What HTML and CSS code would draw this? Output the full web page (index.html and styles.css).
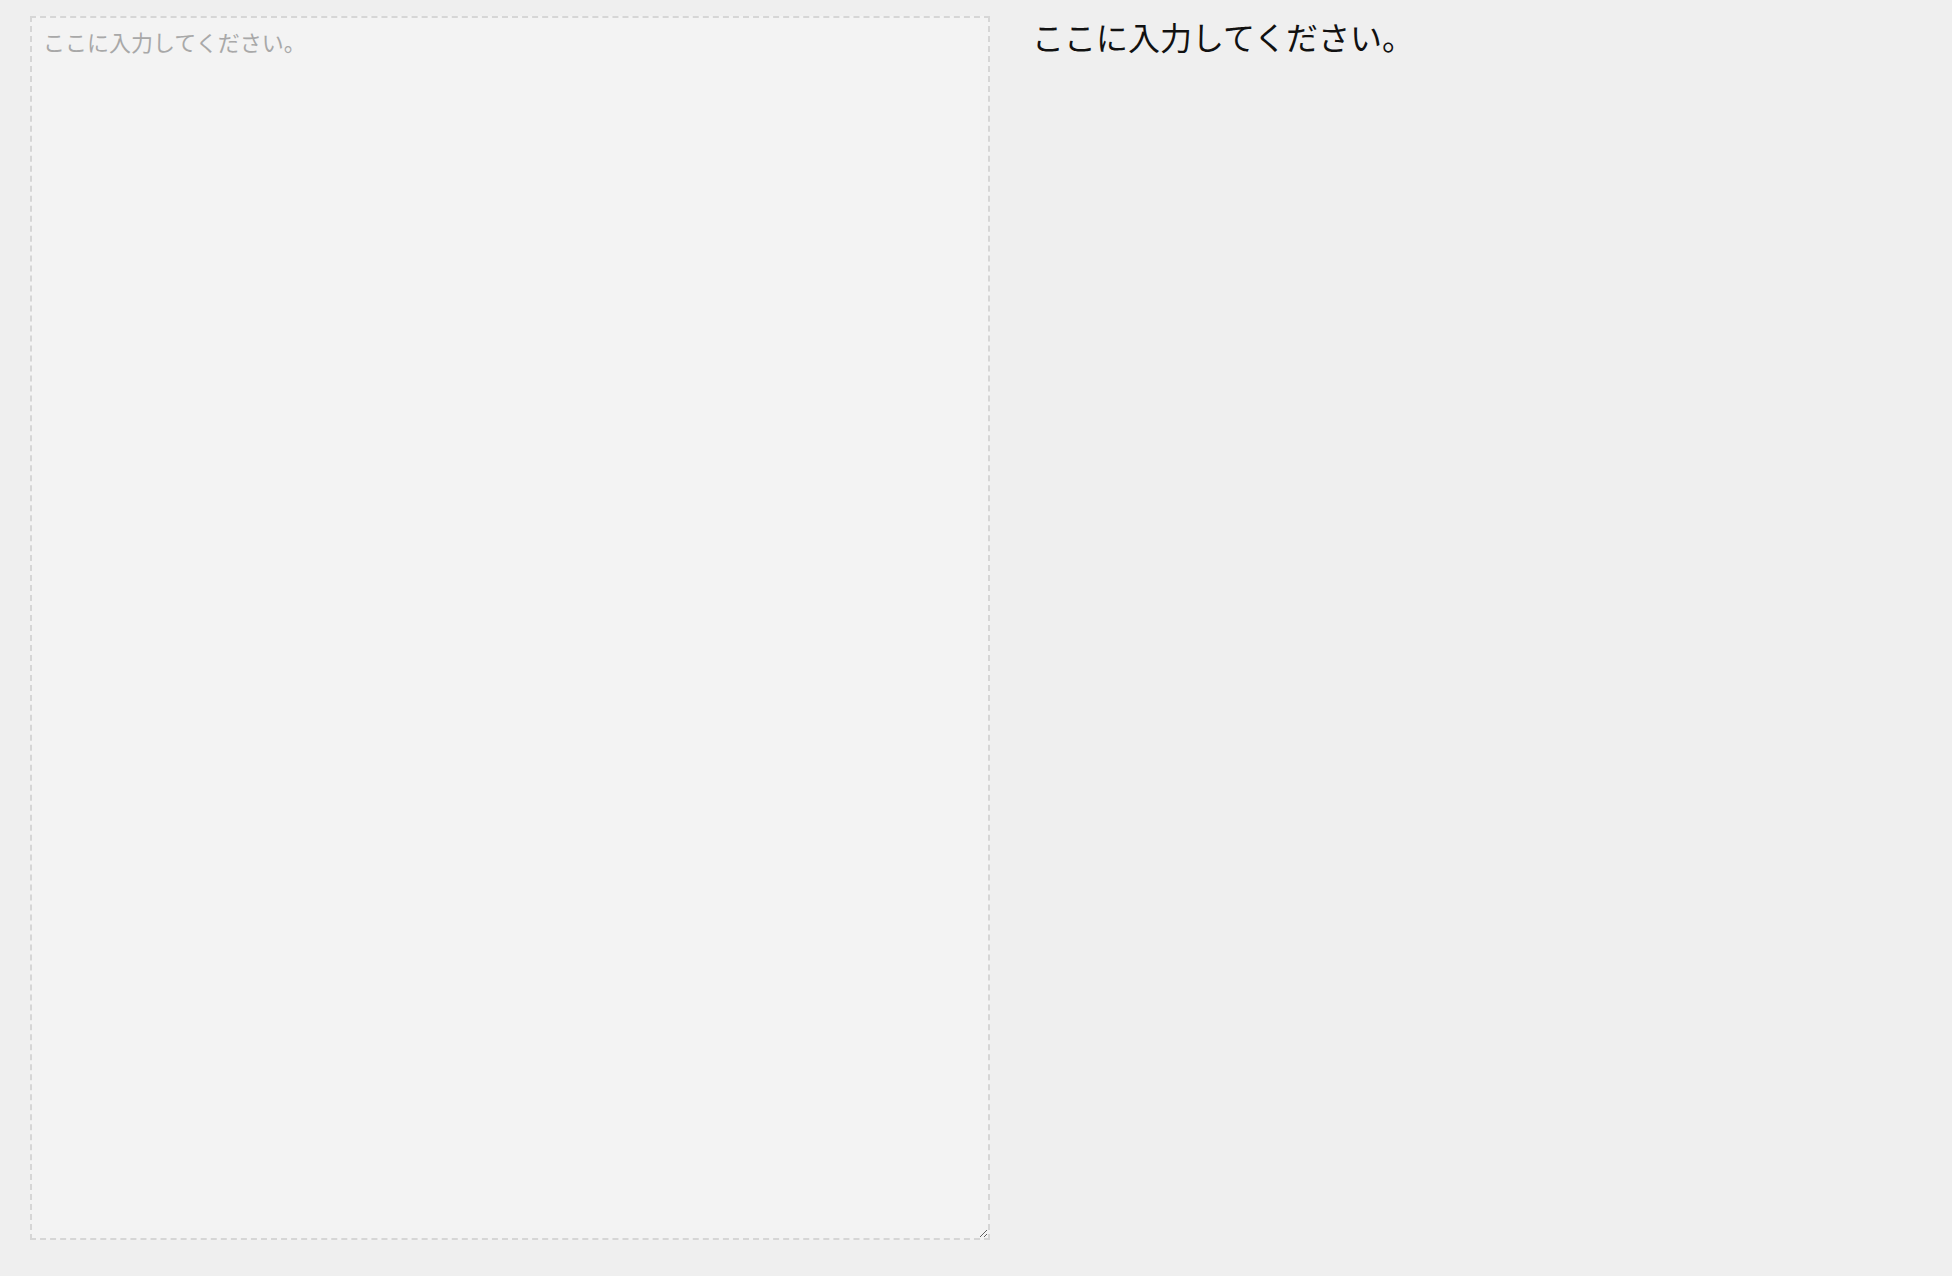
FILE: index.html
```html
<!DOCTYPE html>
<html lang="ja">
<head>
<meta charset="utf-8">
<link rel="stylesheet" href="styles.css">
</head>
<body>
<div class="layout">
  <textarea class="editor" placeholder="ここに入力してください。"></textarea>
  <div class="preview">ここに入力してください。</div>
</div>
</body>
</html>
```
FILE: styles.css
```css
html, body {
  margin: 0;
  padding: 0;
  background: #efefef;
}
.layout {
  display: flex;
  align-items: flex-start;
  gap: 42px;
  padding: 16px 0 0 30px;
}
.editor {
  box-sizing: border-box;
  width: 960px;
  height: 1224px;
  margin: 0;
  padding: 7px 11px;
  border: 2px dashed #d6d6d6;
  background: #f3f3f3;
  font-family: "Noto Sans CJK JP", sans-serif;
  font-size: 22px;
  color: #333;
  outline: none;
  resize: both;
}
.editor::placeholder {
  color: #a8a8a8;
}
.preview {
  font-family: "Noto Sans CJK JP", sans-serif;
  font-size: 32px;
  line-height: 1.2;
  color: #111;
  padding-top: 1px;
}
```
